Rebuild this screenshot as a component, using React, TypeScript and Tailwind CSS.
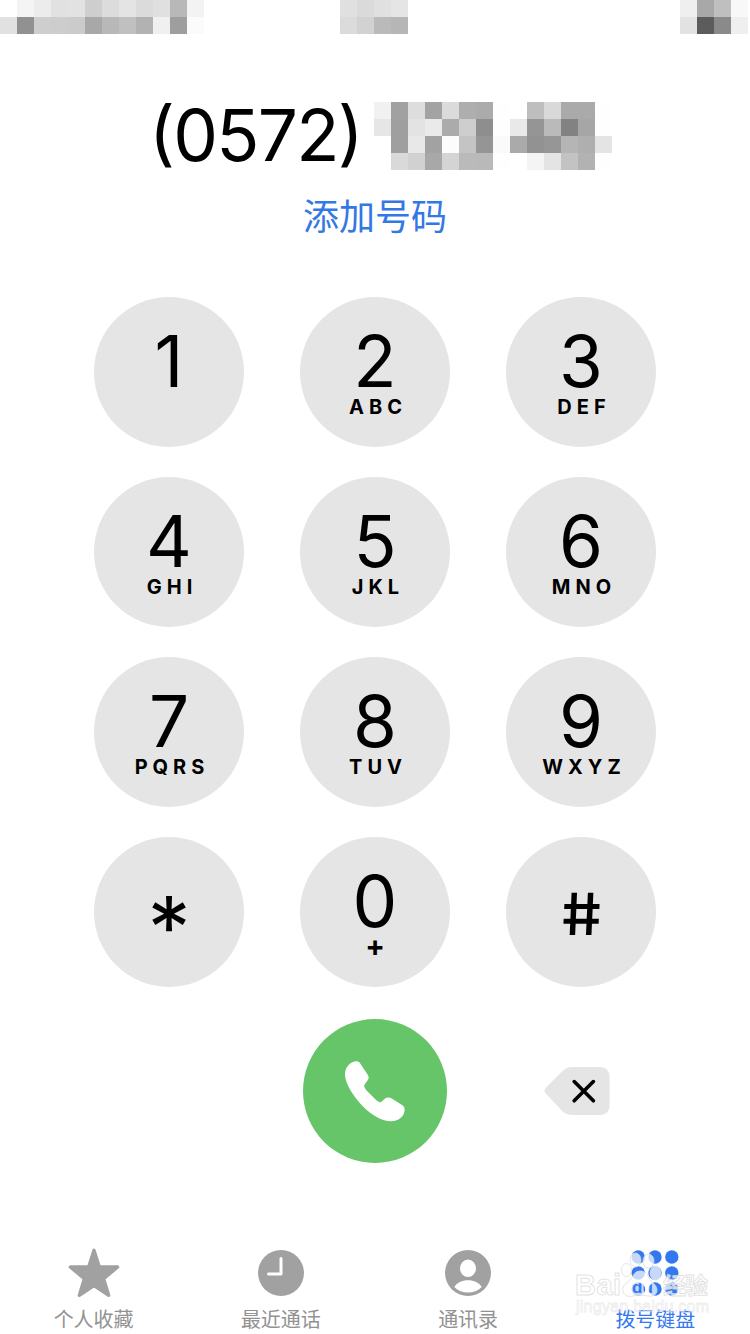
import React from "react";

interface KeyProps {
  digit: string;
  letters?: string;
}

const keys: KeyProps[] = [
  { digit: "1" },
  { digit: "2", letters: "ABC" },
  { digit: "3", letters: "DEF" },
  { digit: "4", letters: "GHI" },
  { digit: "5", letters: "JKL" },
  { digit: "6", letters: "MNO" },
  { digit: "7", letters: "PQRS" },
  { digit: "8", letters: "TUV" },
  { digit: "9", letters: "WXYZ" },
  { digit: "*" },
  { digit: "0", letters: "+" },
  { digit: "#" },
];

// Grey levels of the censor blocks, one array per row
const statusLeft = [
  [255, 244, 236, 225, 226, 206, 220, 228, 219, 224, 184, 243],
  [225, 145, 206, 205, 203, 168, 184, 192, 178, 240, 158, 251],
];
const statusCenter = [
  [224, 218, 224, 229],
  [219, 210, 186, 182],
];
const statusRight = [
  [239, 168, 191, 248],
  [226, 92, 138, 239],
];
const numberMask = [
  [241, 161, 221, 163, 219, 174, 171, 254, 255, 190, 217, 170, 170, 254],
  [230, 159, 227, 234, 171, 206, 142, 254, 233, 149, 186, 130, 166, 254],
  [255, 159, 232, 162, 252, 196, 149, 250, 170, 146, 150, 181, 175, 228],
  [255, 217, 209, 168, 212, 186, 185, 254, 255, 244, 228, 195, 178, 254],
];

const Mosaic: React.FC<{ rows: number[][] }> = ({ rows }) => (
  <div className="flex flex-col">
    {rows.map((row, y) => (
      <div key={y} className="flex">
        {row.map((level, x) => (
          <div
            key={x}
            className="h-[17px] w-[17px] shrink-0"
            style={{ backgroundColor: `rgb(${level}, ${level}, ${level})` }}
          />
        ))}
      </div>
    ))}
  </div>
);

const Key: React.FC<KeyProps> = ({ digit, letters }) => {
  if (digit === "*") {
    return (
      <button className="flex h-[150px] w-[150px] justify-center rounded-full bg-[#e5e5e5] pt-[47px] text-[86px] leading-[88px]">
        {digit}
      </button>
    );
  }
  if (digit === "#") {
    return (
      <button className="flex h-[150px] w-[150px] justify-center rounded-full bg-[#e5e5e5] pt-[48px] pl-[7px] text-[58px] leading-[58px]">
        <span className="scale-x-110 skew-x-[7deg] font-medium">{digit}</span>
      </button>
    );
  }
  return (
    <button className="flex h-[150px] w-[150px] flex-col items-center rounded-full bg-[#e5e5e5] pt-[29px]">
      <span className="text-[71px] leading-[70px]">{digit}</span>
      {letters === "+" ? (
        <span className="text-[29px] leading-[20px] font-bold">+</span>
      ) : (
        <span className="mt-[1px] pl-[6px] text-[20px] leading-[20px] font-bold tracking-[5px]">
          {letters}
        </span>
      )}
    </button>
  );
};

const StarIcon = () => (
  <svg className="h-[50px] w-[52px]" viewBox="202 50 156 150" fill="currentColor">
    <path
      d="M280 57 296 107H351L309 142 324 192 280 163 236 192 251 142 209 107H264Z"
      stroke="currentColor"
      strokeWidth="10"
      strokeLinejoin="round"
    />
  </svg>
);

const ClockIcon = () => (
  <svg className="h-[46px] w-[46px]" viewBox="0 0 46 46">
    <circle cx="23" cy="23" r="23" fill="currentColor" />
    <path d="M23 8.5V24H10.5" fill="none" stroke="#fff" strokeWidth="3" strokeLinecap="round" strokeLinejoin="round" />
  </svg>
);

const ContactIcon = () => (
  <svg className="h-[46px] w-[46px]" viewBox="0 0 46 46">
    <circle cx="23" cy="23" r="23" fill="currentColor" />
    <ellipse cx="23" cy="18.3" rx="8" ry="8.7" fill="#fff" />
    <path d="M9.3 37C12 32.500 17 30.200 23 30.200S34 32.500 36.700 37C33 40.800 28.500 42.600 23 42.600S13 40.800 9.300 37Z" fill="#fff" />
  </svg>
);

const KeypadIcon = () => (
  <svg className="h-[46px] w-[48px]" viewBox="0 0 48 46" fill="currentColor">
    {[7, 23, 39].map((cy) =>
      [7.2, 24, 40.8].map((cx) => <circle key={`${cx}-${cy}`} cx={cx} cy={cy} r="6.7" />)
    )}
  </svg>
);

const tabs = [
  { label: "个人收藏", icon: <StarIcon />, active: false },
  { label: "最近通话", icon: <ClockIcon />, active: false },
  { label: "通讯录", icon: <ContactIcon />, active: false },
  { label: "拨号键盘", icon: <KeypadIcon />, active: true },
];

const Watermark = () => (
  <svg className="absolute right-0 bottom-0 h-[94px] w-[190px]" viewBox="560 1240 190 94">
    <clipPath id="bottom-dots">
      <circle cx="638.500" cy="1289.500" r="6.700" />
      <circle cx="655.300" cy="1289.500" r="6.700" />
    </clipPath>
    <g fill="#fff" fillOpacity="0.72" stroke="#d9d9d9" strokeOpacity="0.75" strokeWidth="1">
      <ellipse cx="626.500" cy="1270" rx="5" ry="6.500" />
      <ellipse cx="635.500" cy="1260" rx="5.500" ry="7" />
      <ellipse cx="648.500" cy="1261" rx="5.500" ry="7" />
      <ellipse cx="655.500" cy="1273" rx="5.500" ry="7" />
      <path d="M640 1271C634 1271 633 1277 629 1281C624 1285 622 1287 623 1291C624 1296 628 1297 633 1296C638 1295 643 1295 648 1296C654 1297 657 1294 657 1290C657 1285 652 1283 649 1278C647 1273 645 1271 640 1271Z" />
      <g fontFamily="'Liberation Sans', 'Noto Sans CJK SC', sans-serif">
        <text x="575" y="1295" fontSize="29" fontWeight="700" textLength="46">Bai</text>
        <text x="663" y="1294" fontSize="23" fontWeight="700" textLength="45">经验</text>
        <text x="576" y="1312" fontSize="16" textLength="133" fillOpacity="0.5" strokeOpacity="0.5" strokeWidth="0.800">
          jingyan.baidu.com
        </text>
      </g>
    </g>
    <text
      x="632"
      y="1293"
      fontSize="17"
      fontWeight="700"
      fill="#3478f0"
      fontFamily="'Liberation Sans', sans-serif"
      clipPath="url(#bottom-dots)"
    >
      du
    </text>
  </svg>
);

const App: React.FC = () => {
  return (
    <div className="relative flex h-[1334px] w-[750px] flex-col overflow-hidden bg-white font-['Inter','Noto_Sans_CJK_SC',sans-serif] text-black">
      <div className="flex h-[34px] justify-between pr-[2px]">
        <Mosaic rows={statusLeft} />
        <div className="mr-[136px]">
          <Mosaic rows={statusCenter} />
        </div>
        <Mosaic rows={statusRight} />
      </div>

      <div className="mt-[68px] flex h-[68px] pl-[149px]">
        <div className="w-[225px] text-[71px] leading-[66px] tracking-[-1.7px] whitespace-nowrap [font-feature-settings:'case']">
          (0572)
        </div>
        <Mosaic rows={numberMask} />
      </div>

      <button className="mt-[27px] h-[40px] text-center text-[36px] leading-[40px] text-[#3478e5]">添加号码</button>

      <div className="mt-[60px] grid grid-cols-[150px_150px_150px] justify-center gap-x-[56px] gap-y-[30px]">
        {keys.map((key) => (
          <Key key={key.digit} {...key} />
        ))}
      </div>

      <div className="mt-8 grid grid-cols-[150px_150px_150px] items-center justify-center gap-x-[56px]">
        <span />
        <button className="flex h-36 w-36 items-center justify-center justify-self-center rounded-full bg-[#66c569]">
          <svg className="h-[63px] w-[63px]" viewBox="162 148 190 190" fill="#fff">
            <path d="M200 152C183 152 165 168 165 192C165 218 190 258 218 287C247 316 277 333 304 333C328 333 345 315 345 298C345 291 342 287 336 283L306 264C299 260 291 260 285 265L274 275C270 277 264 274 258 268L230 240C224 233 221 227 224 222L233 210C238 204 237 198 233 192L212 160C209 155 206 152 200 152Z" />
          </svg>
        </button>
        <button className="ml-[38px] w-[66px]">
          <svg className="h-[48px] w-[66px]" viewBox="763 170 197 145">
            <path
              d="M763 242Q763 238 768 232L817 183Q830 170 845 170H928Q960 170 960 202V283Q960 315 928 315H845Q830 315 817 303L768 251Q763 246 763 242Z"
              fill="#e5e5e5"
            />
            <path d="M853 214 911 272M911 214 853 272" stroke="#000" strokeWidth="11" strokeLinecap="round" />
          </svg>
        </button>
      </div>

      <nav className="mt-[83px] grid w-[749px] grid-cols-4">
        {tabs.map((tab) => (
          <button
            key={tab.label}
            className={
              tab.active
                ? "flex flex-col items-center text-[#3478f0]"
                : "flex flex-col items-center text-[#a1a1a1]"
            }
          >
            <span className="flex h-[54px] items-center">{tab.icon}</span>
            <span className={tab.active ? "mt-2 text-[20px] leading-[24px]" : "mt-2 text-[20px] leading-[24px] text-[#929292]"}>
              {tab.label}
            </span>
          </button>
        ))}
      </nav>

      <Watermark />
    </div>
  );
};

export default App;
